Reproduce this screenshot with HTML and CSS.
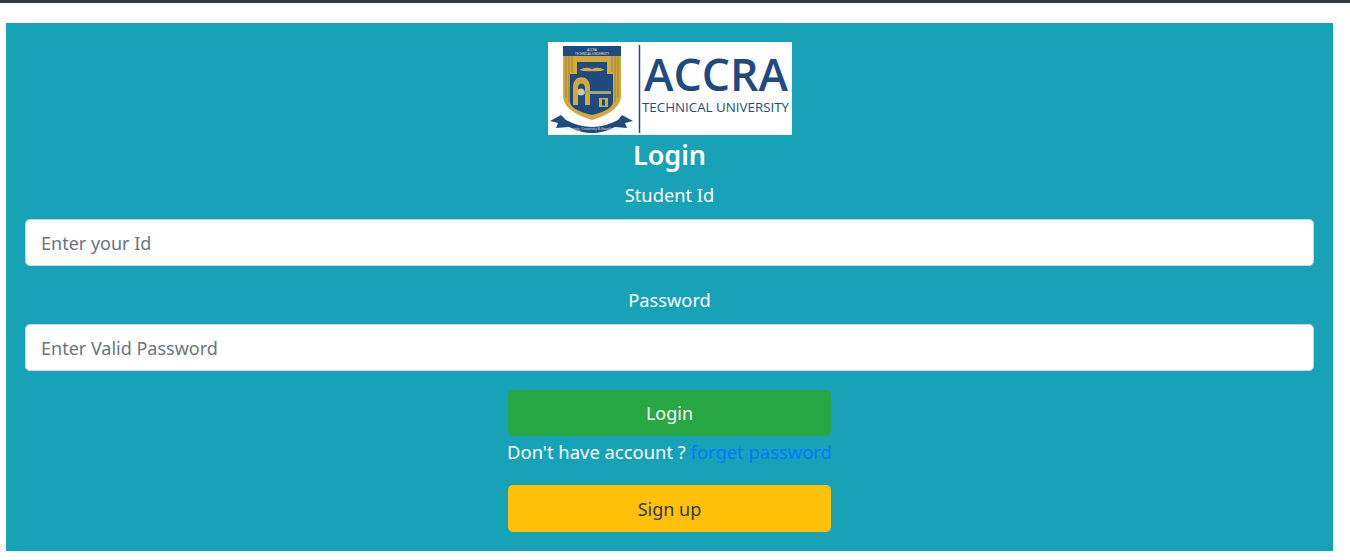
FILE: index.html
```html
<!DOCTYPE html>
<html lang="en">
<head>
<meta charset="utf-8">
<title>Login</title>
<link rel="stylesheet" href="styles.css">
</head>
<body>
<div class="topbar"></div>
<main class="panel">
  <svg class="logo" width="244" height="93" viewBox="0 0 244 93" role="img" aria-label="Accra Technical University">
    <rect width="244" height="93" fill="#fff"/>
    <path d="M15 4H73V54C73 66 58 74 44 78C30 74 15 66 15 54Z" fill="#d2a93a"/>
    <path d="M15 4H73V14H15Z" fill="#1f4a80"/>
    <text class="crest-text" x="44" y="8.500">ACCRA</text>
    <text class="crest-text" x="44" y="12.500">TECHNICAL UNIVERSITY</text>
    <path d="M18 14V56M21 14V60M24 14V30M64 14V30M67 14V60M70 14V56" stroke="#8a7a3c" stroke-width="0.800" fill="none"/>
    <path d="M29 20H59V32H29Z" fill="#1f4a80"/>
    <path d="M22 32H65V60C65 66 54 71 44 73C34 71 22 66 22 60Z" fill="#1f4a80"/>
    <path d="M31 28Q38 24 44 27Q50 24 57 28Q50 30 44 29Q38 30 31 28Z" fill="#d2a93a"/>
    <path d="M25 63V45C25 32 42 32 42 45V63H37V46C37 40 30 40 30 46V63Z" fill="#d2a93a"/>
    <circle cx="33" cy="50" r="3.500" fill="#cfc9a0"/>
    <path d="M36 49H63V52H36Z" fill="#a5a27f"/>
    <path d="M51 56H60V65H51Z" fill="#d2a93a"/>
    <path d="M54 57.500H57V63.500H54Z" fill="#1f4a80"/>
    <path d="M2 79L13 73L18 78Q44 92 70 78L74 73L85 79L77 81L79 86L67 85Q44 97 21 85L8 86L10 81Z" fill="#1f4a80"/>
    <text class="crest-motto" x="44" y="88">Integrity, Creativity &amp; Excellence</text>
    <path d="M91.500 3V91" stroke="#1f4a80" stroke-width="1.500"/>
    <text class="logo-main" x="96" y="49" textLength="144" lengthAdjust="spacingAndGlyphs">ACCRA</text>
    <text class="logo-sub" x="94" y="70" textLength="147" lengthAdjust="spacingAndGlyphs">TECHNICAL UNIVERSITY</text>
  </svg>
  <h3 class="title">Login</h3>
  <form class="form">
    <div class="field">
      <label class="field-label" for="sid">Student Id</label>
      <input class="field-input" id="sid" type="text" placeholder="Enter your Id">
    </div>
    <div class="field">
      <label class="field-label" for="pwd">Password</label>
      <input class="field-input" id="pwd" type="password" placeholder="Enter Valid Password">
    </div>
    <div class="actions">
      <button class="btn btn-login" type="button">Login</button>
      <p class="note">Don't have account ? <a class="note-link" href="#">forget password</a></p>
      <button class="btn btn-signup" type="button">Sign up</button>
    </div>
  </form>
</main>
</body>
</html>
```
FILE: styles.css
```css
* { box-sizing: border-box; }
html, body { margin: 0; height: 560px; overflow: hidden; background: #fff; }
body { font-family: "Noto Sans", "Open Sans", sans-serif; font-size: 18px; color: #fff; }
.topbar { height: 3px; background: #343a40; }
.panel {
  width: 1327px;
  height: 528px;
  margin: 20px 0 0 6px;
  padding: 19px 19px 0;
  background: #17a2b8;
  display: flex;
  flex-direction: column;
  align-items: center;
}
.logo { display: block; flex: none; }
.logo-main { font: 600 46px "Open Sans", sans-serif; fill: #1f4a80; }
.logo-sub { font: 500 13px "Open Sans", sans-serif; fill: #1f4a80; }
.crest-text { font: 3px "Noto Sans", sans-serif; fill: #e8e4c8; text-anchor: middle; }
.crest-motto { font: 3.500px "Noto Sans", sans-serif; fill: #d9e0ea; text-anchor: middle; }
.title { margin: 0 0 2px; height: 40px; font-size: 27px; line-height: 40px; font-weight: 600; text-align: center; }
.form { width: 100%; }
.field { margin-bottom: 16px; display: flex; flex-direction: column; align-items: center; }
.field-label { margin: 6px 0 12px; line-height: 24px; font-size: 18.300px; }
.field-input {
  width: 100%;
  height: 47px;
  padding: 0 15px 0;
  border: 1px solid #ced4da;
  border-radius: 4.800px;
  background: #fff;
  font: 18px "Noto Sans", sans-serif;
  color: #495057;
}
.field-input::placeholder { color: #6c757d; opacity: 1; }
.actions { display: flex; flex-direction: column; align-items: center; padding-top: 3px; }
.btn {
  display: block;
  width: 323px;
  border: 0;
  border-radius: 4.800px;
  font: 18px "Noto Sans", sans-serif;
}
.btn-login { height: 46px; background: #28a745; color: #fff; }
.btn-signup { height: 47px; background: #ffc107; color: #343a40; }
.note { margin: 3px 0 21px; height: 25px; line-height: 25px; font-size: 18.400px; white-space: nowrap; }
.note-link { color: #007bff; text-decoration: none; }
```
